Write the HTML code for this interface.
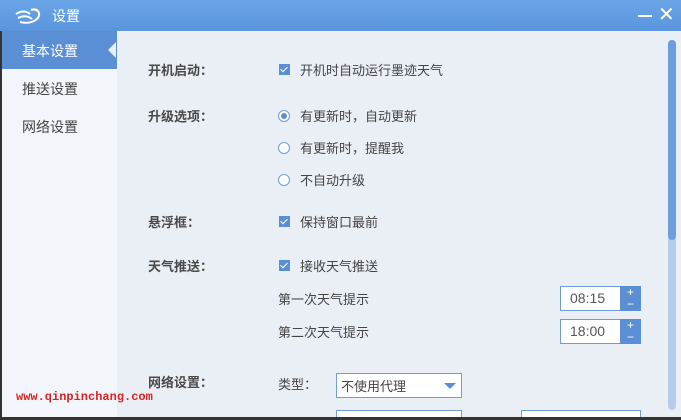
<!DOCTYPE html><html><head><meta charset="utf-8"><style>
html,body{margin:0;width:681px;height:420px;overflow:hidden}
body{background:#eaeef5;font-family:"Liberation Sans","Noto Sans CJK SC",sans-serif;font-size:13px;color:#444;position:relative}
.a{position:absolute;white-space:nowrap}
.t{position:absolute;left:0;top:0;width:681px;height:31px;background:linear-gradient(#6aa6e8,#5a95dc)}
.side{position:absolute;left:0;top:31px;width:117px;height:389px;background:#f2f6fb}
.act{position:absolute;left:0;top:31px;width:117px;height:38px;background:#5a8fd6}
.lab{font-weight:bold;color:#4a4a4a}
.cb{position:absolute;width:11px;height:11px;background:#5b8fd3}
.cb:after{content:"";position:absolute;left:3px;top:1px;width:3px;height:6px;border:solid #fff;border-width:0 1.5px 1.5px 0;transform:rotate(45deg)}
.rb{position:absolute;width:10px;height:10px;border:1px solid #6f9bd6;border-radius:50%;background:#fff}
.box{position:absolute;background:#fff;border:1px solid #6f9bd6;box-sizing:border-box}
.sp{position:absolute;width:21px;background:#5b8fd3;color:#fff;text-align:center;font-size:12px;line-height:12px}
</style></head><body>
<div class="t"></div>
<svg class="a" style="left:14px;top:6px" width="30" height="20"><path d="M2 8q8-5 14 0M4 12q8-4 14 1M6 16q8 2 14-1q6-3 5-8q-2-5-8-3" fill="none" stroke="#fff" stroke-width="2"/></svg>
<div class="a" style="left:52px;top:6px;color:#fff;font-size:14px">设置</div>
<div class="a" style="left:638px;top:15px;width:14px;height:2px;background:#fff"></div>
<div class="a" style="left:658px;top:4px;color:#fff;font-size:20px;line-height:22px">✕</div>
<div class="side"></div><div class="act"></div>
<div class="a" style="left:108px;top:42px;width:0;height:0;border:8px solid transparent;border-right-color:#eaeef5;border-left:0"></div>
<div class="a" style="left:0;top:31px;width:2px;height:389px;background:#333"></div>
<div class="a" style="left:22px;top:41px;color:#fff;font-size:14px">基本设置</div>
<div class="a" style="left:22px;top:79px;font-size:14px">推送设置</div>
<div class="a" style="left:22px;top:117px;font-size:14px">网络设置</div>
<div class="a lab" style="left:148px;top:60px">开机启动：</div>
<div class="cb" style="left:279px;top:64px"></div><div class="a" style="left:300px;top:60px">开机时自动运行墨迹天气</div>
<div class="a lab" style="left:148px;top:106px">升级选项：</div>
<div class="rb" style="left:278px;top:110px"><div style="margin:2px;width:6px;height:6px;border-radius:50%;background:#5b8fd3"></div></div><div class="a" style="left:300px;top:106px">有更新时，自动更新</div>
<div class="rb" style="left:278px;top:142px"></div><div class="a" style="left:300px;top:138px">有更新时，提醒我</div>
<div class="rb" style="left:278px;top:174px"></div><div class="a" style="left:300px;top:170px">不自动升级</div>
<div class="a lab" style="left:148px;top:212px">悬浮框：</div>
<div class="cb" style="left:279px;top:216px"></div><div class="a" style="left:300px;top:212px">保持窗口最前</div>
<div class="a lab" style="left:148px;top:256px">天气推送：</div>
<div class="cb" style="left:279px;top:260px"></div><div class="a" style="left:300px;top:256px">接收天气推送</div>
<div class="a" style="left:278px;top:289px">第一次天气提示</div>
<div class="a" style="left:278px;top:322px">第二次天气提示</div>
<div class="box" style="left:560px;top:286px;width:61px;height:25px"></div><div class="a" style="left:570px;top:290px;font-size:14px;color:#555">08:15</div>
<div class="sp" style="left:620px;top:286px;height:25px">+<br>−</div>
<div class="box" style="left:560px;top:319px;width:61px;height:25px"></div><div class="a" style="left:570px;top:323px;font-size:14px;color:#555">18:00</div>
<div class="sp" style="left:620px;top:319px;height:25px">+<br>−</div>
<div class="a lab" style="left:148px;top:372px">网络设置：</div>
<div class="a" style="left:278px;top:374px">类型：</div>
<div class="box" style="left:336px;top:373px;width:126px;height:25px"></div><div class="a" style="left:341px;top:376px">不使用代理</div>
<div class="a" style="left:444px;top:383px;width:0;height:0;border:6px solid transparent;border-top:6px solid #5b8fd3;border-bottom:0"></div>
<div class="box" style="left:336px;top:410px;width:126px;height:10px;border-bottom:0"></div>
<div class="box" style="left:521px;top:410px;width:120px;height:10px;border-bottom:0"></div>
<div class="a" style="left:668px;top:40px;width:8px;height:370px;background:#b5cdec;border-radius:4px"></div>
<div class="a" style="left:668px;top:40px;width:8px;height:200px;background:#6d9fdc;border-radius:4px"></div>
<div class="a" style="left:16px;top:390px;color:#e02020;font-family:'Liberation Mono',monospace;font-size:12px;font-weight:bold">www.qinpinchang.com</div>
<div class="a" style="left:0;top:417px;width:681px;height:3px;background:#333"></div>
</body></html>
